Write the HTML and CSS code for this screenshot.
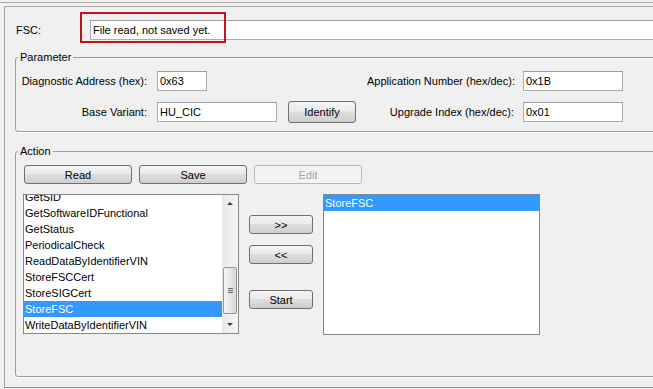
FILE: index.html
```html
<!DOCTYPE html>
<html lang="en">
<head>
    <meta charset="UTF-8">
    <meta name="viewport" content="width=device-width, initial-scale=1.0">
    <title>FSC</title>
    <link rel="stylesheet" href="styles.css">
</head>
<body>
    <div class="edge"></div>

    <div class="frame">
        <div class="fsc-row">
            <span class="fsc-label">FSC:</span>
            <div class="field fsc-field">File read, not saved yet.</div>
            <div class="highlight"></div>
        </div>

        <fieldset class="group param">
            <legend>Parameter</legend>
            <div class="param-grid">
                <span class="lbl">Diagnostic Address (hex):</span>
                <div class="field w50">0x63</div>
                <span></span>
                <span class="lbl lbl-right">Application Number (hex/dec):</span>
                <div class="field w100">0x1B</div>

                <span class="lbl">Base Variant:</span>
                <div class="field w120">HU_CIC</div>
                <button class="btn btn-identify">Identify</button>
                <span class="lbl lbl-right">Upgrade Index (hex/dec):</span>
                <div class="field w100">0x01</div>
            </div>
        </fieldset>

        <fieldset class="group action">
            <legend>Action</legend>
            <div class="action-buttons">
                <button class="btn btn-wide">Read</button>
                <button class="btn btn-wide">Save</button>
                <button class="btn btn-wide" disabled>Edit</button>
            </div>

            <div class="lists">
                <div class="listbox left-list">
                    <ul class="items scrolled">
                        <li>GetSID</li>
                        <li>GetSoftwareIDFunctional</li>
                        <li>GetStatus</li>
                        <li>PeriodicalCheck</li>
                        <li>ReadDataByIdentifierVIN</li>
                        <li>StoreFSCCert</li>
                        <li>StoreSIGCert</li>
                        <li class="selected">StoreFSC</li>
                        <li>WriteDataByIdentifierVIN</li>
                    </ul>
                    <div class="scrollbar">
                        <div class="sb-btn"><div class="arrow-up"></div></div>
                        <div class="sb-track">
                            <div class="sb-thumb"><div class="grip"></div></div>
                        </div>
                        <div class="sb-btn"><div class="arrow-down"></div></div>
                    </div>
                </div>

                <div class="move-buttons">
                    <button class="btn btn-move btn-add">&gt;&gt;</button>
                    <button class="btn btn-move btn-remove">&lt;&lt;</button>
                    <button class="btn btn-move btn-start">Start</button>
                </div>

                <div class="listbox right-list">
                    <ul class="items">
                        <li class="selected">StoreFSC</li>
                    </ul>
                </div>
            </div>
        </fieldset>
    </div>
</body>
</html>
```

FILE: styles.css
```css
body {
    margin: 0;
    background-color: #f0f0f0;
    font-family: "Liberation Sans", Arial, sans-serif;
    font-size: 11px;
    color: #000;
    overflow: hidden;
}

.edge {
    margin-top: 2px;
    height: 4px;
    border-top: 1px solid #a8a8a8;
    box-sizing: border-box;
}

.frame {
    position: relative;
    margin-left: 4px;
    width: 720px;
    height: 382px;
    box-sizing: border-box;
    border-top: 1px solid #a8a8a8;
    border-left: 1px solid #a0a0a0;
    border-bottom: 1px solid #8c8c8c;
    padding-left: 10px;
}

/* FSC status line */
.fsc-row {
    position: relative;
    display: flex;
    align-items: center;
    margin-top: 12px;
    height: 22px;
}

.fsc-label {
    width: 74px;
    padding-left: 1px;
}

.fsc-field {
    flex-grow: 1;
    height: 22px;
}

.highlight {
    position: absolute;
    left: 65px;
    top: -7px;
    width: 146px;
    height: 31px;
    box-sizing: border-box;
    border: 2px solid #c1141d;
}

.field {
    display: flex;
    align-items: center;
    box-sizing: border-box;
    height: 20px;
    padding: 0 2px;
    background-color: #fff;
    border: 1px solid #abadb3;
    border-top-color: #9a9ca2;
}

.w50 { width: 50px; }
.w100 { width: 100px; }
.w120 { width: 120px; }

/* group boxes */
.group {
    margin: 0;
    padding: 0;
    border: 1px solid #9c9c9c;
    border-radius: 3px;
    box-shadow: 1px 1px 0 #fff;
}

.group legend {
    margin-left: 2px;
    padding: 0 2px;
    line-height: 13px;
    font-size: 11px;
}

.param {
    margin-top: 10px;
}

.param-grid {
    display: grid;
    grid-template-columns: 141px 131px 79px 156px 100px;
    grid-auto-rows: 22px;
    row-gap: 9px;
    align-items: center;
    padding: 6px 0 8px;
}

.lbl {
    text-align: right;
    padding-right: 10px;
    white-space: nowrap;
}

.lbl-right {
    padding-right: 9px;
}

/* buttons */
.btn {
    font-family: inherit;
    font-size: 11px;
    color: #000;
    height: 19px;
    padding: 0;
    box-sizing: border-box;
    border: 1px solid #707070;
    border-radius: 3px;
    background: linear-gradient(#f3f3f3, #ebebeb 45%, #dddddd 50%, #cfcfcf);
}

.btn:disabled {
    color: #a3a3a3;
    border-color: #b5b8ba;
    background: #f4f4f4;
}

.btn-identify {
    width: 68px;
    height: 22px;
}

.action {
    margin-top: 13px;
    padding-bottom: 41px;
}

.action-buttons {
    display: flex;
    gap: 7px;
    padding: 7px 0 0 8px;
}

.btn-wide {
    width: 108px;
}

.lists {
    display: flex;
    align-items: flex-start;
    margin-top: 10px;
    padding-left: 7px;
}

.listbox {
    box-sizing: border-box;
    background-color: #fff;
    border: 1px solid #828790;
    overflow: hidden;
}

.left-list {
    display: flex;
    width: 216px;
    height: 140px;
}

.right-list {
    width: 217px;
    height: 141px;
    margin-left: 10px;
}

.items {
    list-style: none;
    margin: 0;
    padding: 0;
    flex-grow: 1;
}

.items li {
    height: 16px;
    line-height: 16px;
    padding-left: 1px;
    white-space: nowrap;
}

.items li.selected {
    background-color: #3399ff;
    color: #fff;
}

.scrolled {
    margin-top: -6px;
}

/* scrollbar of the left list */
.scrollbar {
    display: flex;
    flex-direction: column;
    width: 16px;
    flex-shrink: 0;
    background: linear-gradient(to right, #e8e8e8, #f4f4f4);
}

.sb-btn {
    height: 17px;
    display: flex;
    align-items: center;
    justify-content: center;
}

.arrow-up {
    border-left: 3px solid transparent;
    border-right: 3px solid transparent;
    border-bottom: 3px solid #3c3c3c;
}

.arrow-down {
    border-left: 3px solid transparent;
    border-right: 3px solid transparent;
    border-top: 3px solid #3c3c3c;
}

.sb-track {
    flex-grow: 1;
}

.sb-thumb {
    display: flex;
    align-items: center;
    justify-content: center;
    margin: 55px 1px 0;
    height: 47px;
    box-sizing: border-box;
    border: 1px solid #959595;
    border-radius: 2px;
    background: linear-gradient(to right, #f4f4f4, #e6e6e6 50%, #d8d8d8);
}

.grip {
    width: 5px;
    height: 5px;
    background: repeating-linear-gradient(#6a6a6a 0 1px, transparent 1px 2px);
}

.move-buttons {
    display: flex;
    flex-direction: column;
    margin-left: 10px;
    width: 64px;
}

.btn-move {
    width: 64px;
}

.btn-add {
    margin-top: 21px;
}

.btn-remove {
    margin-top: 11px;
}

.btn-start {
    margin-top: 26px;
}
```
